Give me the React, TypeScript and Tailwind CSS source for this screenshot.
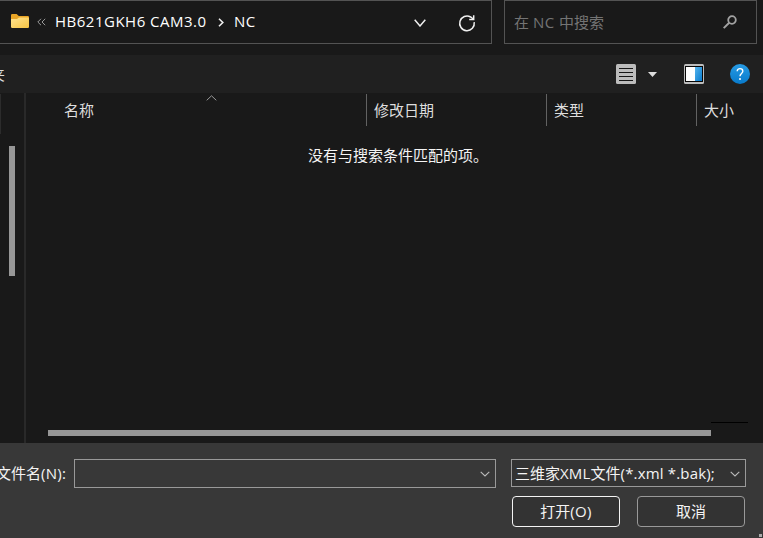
import type { ReactNode } from "react";

function FolderIcon() {
  return (
    <svg width="20" height="16" viewBox="0 0 20 16" className="block">
      <defs>
        <linearGradient id="folder" x1="0" y1="0" x2="1" y2="1">
          <stop offset="0" stopColor="#ffe390" />
          <stop offset="1" stopColor="#f6c443" />
        </linearGradient>
      </defs>
      <path d="M1 1.2Q1 0 2.2 0H6.6L8.8 2H17.8Q19 2 19 3.2V9H1Z" fill="#e9a526" />
      <path d="M1 5H7L9 3.5H18Q19 3.5 19 4.5V12.8Q19 14 17.8 14H2.2Q1 14 1 12.8Z" fill="url(#folder)" />
    </svg>
  );
}

function Chevron({ w, h, color, stroke }: { w: number; h: number; color: string; stroke: number }) {
  return (
    <svg width={w} height={h} viewBox={`0 0 ${w} ${h}`} fill="none" stroke={color} strokeWidth={stroke} className="block">
      <path d={`M0.7 0.8L${w / 2} ${h - 1}L${w - 0.7} 0.8`} />
    </svg>
  );
}

function RefreshIcon() {
  return (
    <svg width="18" height="18" viewBox="0 0 18 18" fill="none" stroke="#f0f0f0" strokeWidth="1.5" className="block">
      <path d="M16.2 8.2A7.3 7.3 0 1 1 12.6 3L15.2 5" />
      <path d="M15.7 1.3V5.4H11.2" />
    </svg>
  );
}

function SearchIcon() {
  return (
    <svg width="14" height="14" viewBox="0 0 14 14" fill="none" stroke="#a2a2a2" className="block">
      <circle cx="9" cy="5" r="3.8" strokeWidth="1.8" />
      <path d="M6.2 7.8L0.7 13.1" strokeWidth="2" />
    </svg>
  );
}

function ListIcon() {
  return (
    <svg width="20" height="20" viewBox="0 0 20 20" className="block">
      <rect width="20" height="20" rx="1.5" fill="#bcbcbc" />
      <path d="M3 4.5H17M3 8.5H17M3 12.5H17M3 16.5H17" stroke="#161616" />
    </svg>
  );
}

function PaneIcon() {
  return (
    <svg width="20" height="20" viewBox="0 0 20 20" className="block">
      <defs>
        <linearGradient id="pane" x1="0" y1="0" x2="1" y2="1">
          <stop offset="0" stopColor="#55b4ed" />
          <stop offset="1" stopColor="#087bce" />
        </linearGradient>
      </defs>
      <rect width="20" height="20" rx="1.5" fill="#bcbcbc" />
      <rect x="1" y="2" width="18" height="16" fill="#080808" />
      <rect x="2" y="3" width="9" height="14" fill="#fff" />
      <rect x="11" y="3" width="7" height="14" fill="url(#pane)" />
    </svg>
  );
}

function HelpIcon() {
  return (
    <svg width="20" height="20" viewBox="0 0 20 20" fill="none" className="block">
      <defs>
        <linearGradient id="help" x1="0" y1="0" x2="0" y2="1">
          <stop offset="0" stopColor="#279be4" />
          <stop offset="1" stopColor="#087acb" />
        </linearGradient>
      </defs>
      <circle cx="10" cy="10" r="10" fill="url(#help)" />
      <path d="M7.2 7.2C7.2 3.7 12.8 3.7 12.8 7.2C12.8 9.4 10 9.5 10 12.2" stroke="#fff" strokeWidth="1.4" />
      <circle cx="10" cy="15" r="1" fill="#fff" />
    </svg>
  );
}

function Column({ width, children }: { width: string; children: ReactNode }) {
  return <div className={`h-8 shrink-0 border-l border-[#626262] pl-[7px] leading-8 ${width}`}>{children}</div>;
}

export default function App() {
  return (
    <div className="flex h-[538px] w-[763px] flex-col overflow-hidden whitespace-nowrap bg-[#191919] font-['Open_Sans','Noto_Sans_CJK_SC',sans-serif] text-[15px] text-[#f4f4f4]">
      <div className="flex h-[55px] shrink-0">
        <div className="flex h-11 w-[492px] items-center border-y border-r border-[#535353] pl-[10px]">
          <FolderIcon />
          <svg width="9" height="8" viewBox="0 0 9 8" fill="none" stroke="#999" className="ml-[7px]">
            <path d="M4 0.8L0.8 4L4 7.2M8.2 0.8L5 4L8.2 7.2" />
          </svg>
          <span className="ml-[9px] w-[153px] pb-[2px] text-white tracking-[0.5px]">HB621GKH6 CAM3.0</span>
          <svg width="6" height="9" viewBox="0 0 6 9" fill="none" stroke="#eee" strokeWidth="1.6" className="ml-[10px]">
            <path d="M1 0.8L4.8 4.5L1 8.2" />
          </svg>
          <span className="ml-[10px] w-[180px] pb-[2px] text-white tracking-[0.5px]">NC</span>
          <div className="pt-[2px]"><Chevron w={12} h={8} color="#eee" stroke={1.5} /></div>
          <div className="ml-[32px] pt-[2px]"><RefreshIcon /></div>
        </div>
        <div className="ml-3 flex h-11 w-[253px] items-center justify-between border border-[#535353] pl-[9px] pr-[19px] text-[#747474]">
          <span>在 <span className="tracking-[0.5px]">NC </span>中搜索</span>
          <SearchIcon />
        </div>
      </div>

      <div className="flex h-[38px] shrink-0 items-center bg-[#202020]">
        <div className="flex w-[616px] justify-start overflow-hidden">
          <span className="-ml-[10px] text-[#ddd]">夹</span>
        </div>
        <ListIcon />
        <svg width="9" height="5" viewBox="0 0 9 5" className="ml-3"><path d="M0 0H9L4.5 5Z" fill="#ddd" /></svg>
        <div className="ml-[27px]"><PaneIcon /></div>
        <div className="ml-[26px]"><HelpIcon /></div>
      </div>

      <div className="flex h-[350px] shrink-0">
        <div className="flex w-6 shrink-0">
          <div className="mt-px h-10 w-px bg-[#2c2c2c]" />
          <div className="ml-2 mt-[53px] h-[130px] w-[6px] bg-[#979797]" />
        </div>
        <div className="w-[2px] shrink-0 bg-[#292929]" />
        <div className="flex min-w-0 flex-1 flex-col">
          <div className="flex h-[34px] shrink-0 pt-px text-[#dedede]">
            <div className="flex w-[340px] shrink-0 pl-[38px] leading-8">
              <span className="w-[143px]">名称</span>
              <svg width="11" height="6" viewBox="0 0 11 6" fill="none" stroke="#999" className="mt-px ml-[-1px]">
                <path d="M0.7 5.3L5.5 0.8L10.3 5.3" />
              </svg>
            </div>
            <Column width="w-[180px]">修改日期</Column>
            <Column width="w-[150px]">类型</Column>
            <Column width="w-[67px]">大小</Column>
          </div>
          <div className="flex-1 pl-[282px] pt-4 leading-6">没有与搜索条件匹配的项。</div>
          <div className="flex h-[21px] shrink-0 pl-[22px]">
            <div className="mt-2 h-[6px] w-[663px] bg-[#979797]" />
            <div className="h-px w-[37px] bg-black" />
          </div>
        </div>
      </div>

      <div className="flex flex-1 flex-col bg-[#383838] pt-4">
        <div className="flex h-[37px]">
          <span className="-ml-[4px] w-[78px] leading-[29px]">文件名<span className="tracking-[0.25px]">(N):</span></span>
          <div className="flex h-[29px] w-[422px] items-center justify-end border border-[#999] pr-[5px]">
            <Chevron w={10} h={6} color="#bbb" stroke={1.1} />
          </div>
          <div className="ml-[15px] flex h-7 w-[235px] items-center justify-between border border-[#999] bg-[#333] pl-[3px] pr-[5px]">
            <span>三维家<span className="tracking-[0.17px]">XML</span>文件<span className="tracking-[0.17px]">(*.xml *.bak);</span></span>
            <div className="pt-px"><Chevron w={10} h={6} color="#bbb" stroke={1.1} /></div>
          </div>
        </div>
        <div className="flex pl-[512px]">
          <button className="h-[31px] w-[108px] rounded-[4px] border border-[#f4f4f4] bg-[#333]">打开<span className="tracking-[0.4px]">(O)</span></button>
          <button className="ml-[17px] h-[31px] w-[108px] rounded-[4px] border border-[#999] bg-[#333]">取消</button>
        </div>
        <div className="mt-auto flex justify-end pb-[1px] pr-px">
          <div className="size-[3px] bg-[#aaa]" />
        </div>
      </div>
    </div>
  );
}
